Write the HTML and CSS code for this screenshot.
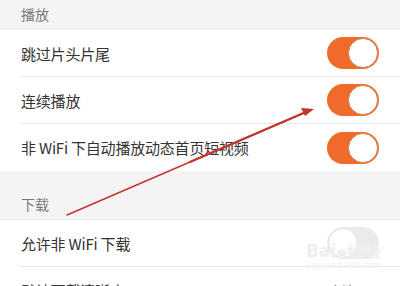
FILE: index.html
```html
<!DOCTYPE html>
<html lang="zh">
<head>
<meta charset="utf-8">
<link rel="stylesheet" href="styles.css">
</head>
<body>
<div class="page">
  <div class="section-head top">播放</div>
  <div class="group">
    <div class="row"><span class="label">跳过片头片尾</span><span class="switch on"><span class="knob"></span></span></div>
    <div class="row"><span class="label">连续播放</span><span class="switch on"><span class="knob"></span></span></div>
    <div class="row last"><span class="label">非 WiFi 下自动播放动态首页短视频</span><span class="switch on"><span class="knob"></span></span></div>
  </div>
  <div class="section-head gap">下载</div>
  <div class="group">
    <div class="row"><span class="label">允许非 WiFi 下载</span><span class="switch off"><span class="knob"></span></span></div>
    <div class="row last"><span class="label">默认下载清晰度</span><span class="value">高清</span></div>
  </div>
  <div class="watermark"><span class="wm-main">Bai<span class="wm-paw">●</span>经验</span><span class="wm-sub">jingyan.baidu.com</span></div>
  <svg class="arrow" width="400" height="286" viewBox="0 0 400 286">
    <path d="M67 215 L306 112" stroke="#c4332c" stroke-width="1.4" fill="none" stroke-linecap="round"/>
    <path d="M190 162 L306 112" stroke="#c4332c" stroke-width="2.2" fill="none" stroke-linecap="round"/>
    <path d="M314 109 L301 108 L305 116 Z" fill="#c4332c"/>
  </svg>
</div>
</body>
</html>
```
FILE: styles.css
```css
* { box-sizing: border-box; }
html, body { margin: 0; padding: 0; background: #fff; }
.page {
  position: relative;
  width: 400px;
  height: 286px;
  overflow: hidden;
  font-family: "Noto Sans CJK SC", "Noto Sans", sans-serif;
  color: #333;
}
.section-head {
  background: #f4f4f4;
  color: #7a7a7a;
  font-size: 14px;
  padding-left: 21px;
  display: flex;
  align-items: flex-end;
  border-bottom: 1px solid #ececec;
}
.section-head.top { height: 30px; padding-bottom: 5px; }
.section-head.gap { height: 49px; padding-bottom: 5px; }
.group { background: #fff; }
.row {
  height: 47px;
  margin-left: 20px;
  padding-left: 1px;
  padding-right: 21px;
  display: flex;
  align-items: center;
  justify-content: space-between;
  border-bottom: 1px solid #e8e8e8;
}
.row.last { border-bottom: 0; }
.label { font-size: 15px; letter-spacing: -0.2px; }
.value { font-size: 13px; color: #555; margin-right: 24px; }
.switch {
  width: 52px;
  height: 32px;
  border-radius: 16px;
  display: flex;
  align-items: center;
  padding: 0 1px;
}
.switch.on { background: #f06b2b; justify-content: flex-end; }
.switch.off { background: #ebebeb; justify-content: flex-start; }
.knob {
  width: 30px;
  height: 30px;
  border-radius: 50%;
  background: #fff;
}
.switch.on .knob { border: 1.5px solid #c98a5c; }
.switch.off .knob { border: 1px solid #e2e2e2; }
.watermark {
  position: absolute;
  left: 306px;
  top: 240px;
  display: flex;
  flex-direction: column;
  align-items: center;
  color: #efefef;
  font-family: "DejaVu Sans", sans-serif;
}
.wm-main { font-size: 17px; font-weight: bold; }
.wm-paw { font-size: 12px; }
.wm-sub { font-size: 8px; color: #f0f0f0; margin-top: -2px; }
.arrow { position: absolute; left: 0; top: 0; pointer-events: none; }
```
